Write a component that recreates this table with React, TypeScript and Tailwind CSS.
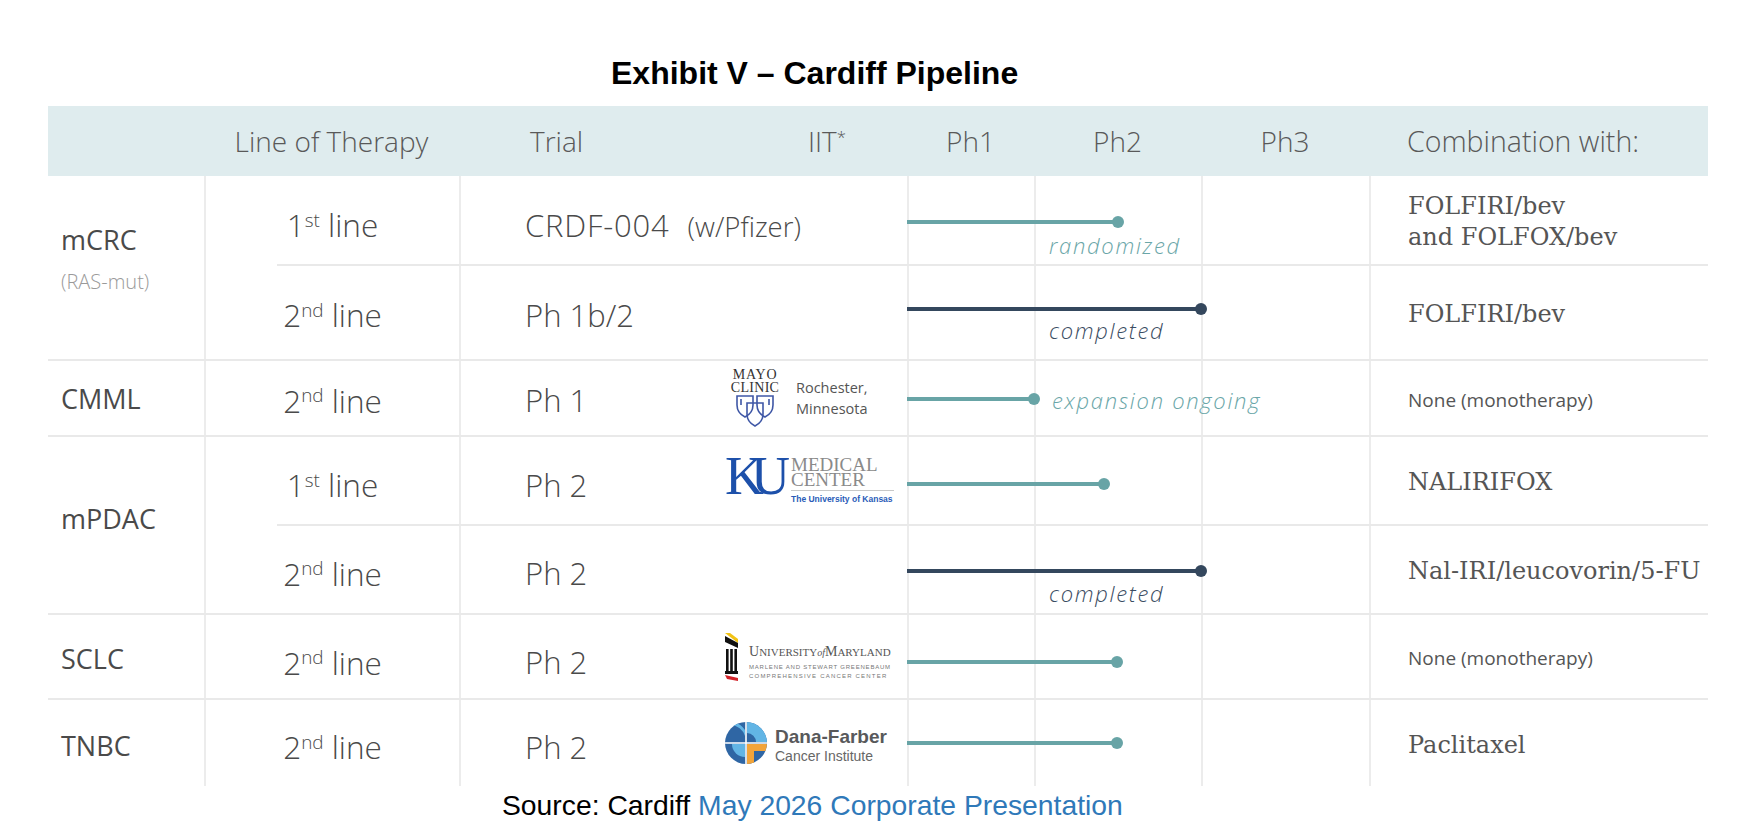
import React from "react";

const sans = "font-[family-name:'Open_Sans',Lato,sans-serif]";
const slab = "font-[family-name:'DejaVu_Serif',serif]";
const times = "font-[family-name:'Liberation_Serif',serif]";
const arial = "font-[family-name:'Liberation_Sans',Arial,sans-serif]";

type Bar = {
  top: number;
  end: number;
  navy?: boolean;
  label?: string;
  labelTop?: number;
  labelLeft?: number;
};

type Sub = {
  h: number;
  dy: number;
  line: [string, string];
  trial: React.ReactNode;
  logo?: React.ReactNode;
  bar: Bar;
  combo: React.ReactNode;
};

const Sup = ({ children }: { children: React.ReactNode }) => (
  <span className="relative -top-[0.55em] text-[0.6em]">{children}</span>
);

const MayoLogo = () => (
  <div className="flex items-center gap-[14px] pl-[3px]">
    <div className={`flex w-[54px] flex-col items-center ${times} text-[#333]`}>
      <span className="text-[14px] leading-[12px] tracking-[0.8px]">MAYO</span>
      <span className="text-[14px] leading-[13px] tracking-[0.3px]">CLINIC</span>
      <svg width="40" height="33" viewBox="0 0 40 33" fill="none" stroke="#3f57a6" strokeWidth="1.6">
        <path d="M2 2 H18 V11 Q18 19 10 23 Q2 19 2 11 Z" />
        <path d="M22 2 H38 V11 Q38 19 30 23 Q22 19 22 11 Z" />
        <path d="M12 9 H28 V20 Q28 28 20 32 Q12 28 12 20 Z" />
        <path d="M6 5 V11 M34 5 V11" />
      </svg>
    </div>
    <div className={`${sans} text-[14.5px] leading-[21px] text-[#555]`}>
      Rochester,
      <br />
      Minnesota
    </div>
  </div>
);

const KuLogo = () => (
  <div className="flex items-start">
    <div className={`${times} mr-[14px] text-[54px] leading-[38px] tracking-[-13px] text-[#1d50aa]`}>KU</div>
    <div className={`flex flex-col ${times} text-[19px] leading-[15px] text-[#8a8a8a]`}>
      <span>
        MEDICAL
        <br />
        CENTER
      </span>
      <div className="mt-[3px] h-[1px] w-[103px] bg-[#c8c8c8]" />
      <span className={`${arial} mt-[3px] text-[8.5px] font-bold leading-[10px] text-[#2a5cb8]`}>
        The University of Kansas
      </span>
    </div>
  </div>
);

const UmdLogo = () => (
  <div className="flex items-start gap-[11px]">
    <svg width="13" height="48" viewBox="0 0 13 48">
      <polygon points="0,0 5,0 13,6 13,10" fill="#f2c314" />
      <polygon points="0,3 13,10 13,15 0,9" fill="#111" />
      <rect x="1" y="16" width="2.6" height="22" fill="#111" />
      <rect x="5.2" y="16" width="2.6" height="22" fill="#111" />
      <rect x="9.4" y="16" width="2.6" height="22" fill="#111" />
      <rect x="0" y="38" width="13" height="3" fill="#111" />
      <polygon points="0,42 13,45 13,48 2,46" fill="#d2232a" />
    </svg>
    <div className="mt-[13px] flex flex-col text-[#555]">
      <span className={`${times} text-[14px] leading-[12px]`}>
        U<span className="text-[11px]">NIVERSITY</span>
        <span className="text-[10px] italic">of</span>M<span className="text-[11px]">ARYLAND</span>
      </span>
      <span className={`${arial} mt-[4px] text-[6px] leading-[9px] tracking-[0.8px] text-[#777]`}>
        MARLENE AND STEWART GREENEBAUM
      </span>
      <span className={`${arial} text-[6px] leading-[9px] tracking-[1.2px] text-[#777]`}>
        COMPREHENSIVE CANCER CENTER
      </span>
    </div>
  </div>
);

const DanaLogo = () => (
  <div className="flex items-end gap-[8px]">
    <svg width="42" height="42" viewBox="0 0 42 42">
      <defs>
        <clipPath id="dfc">
          <circle cx="21" cy="21" r="21" />
        </clipPath>
      </defs>
      <g clipPath="url(#dfc)">
        <rect width="42" height="42" fill="#2f66a4" />
        <path d="M22 0 H42 V20 H31 A9 9 0 0 0 22 11 Z" fill="#62b5e5" />
        <path d="M9 0 A20 20 0 0 1 20 8 V14 A16 16 0 0 0 6 3 Z" fill="#62b5e5" />
        <path d="M7 22 H20 V35 A13 13 0 0 1 7 22 Z" fill="#62b5e5" />
        <rect x="22" y="22" width="20" height="7" fill="#f2a43a" />
        <rect x="22" y="22" width="7" height="20" fill="#f2a43a" />
        <path d="M21 0 V21 H0 M21 21 H42 M21 21 V42" stroke="#fff" strokeWidth="1.6" fill="none" />
      </g>
    </svg>
    <div className={`${arial} flex flex-col`}>
      <span className="text-[19px] font-bold leading-[22px] text-[#58595b]">Dana-Farber</span>
      <span className="text-[14px] leading-[16px] text-[#666]">Cancer Institute</span>
    </div>
  </div>
);

const PhaseCell = ({ bar }: { bar: Bar }) => (
  <div className="relative flex">
    <div className="w-[127px] border-l-2 border-[#ececec]" />
    <div className="w-[167px] border-l-2 border-[#ececec]" />
    <div className="w-[168px] border-l-2 border-[#ececec]" />
    <div className="absolute left-0" style={{ top: bar.top - 2, width: bar.end }}>
      <div className={`h-[4px] w-full ${bar.navy ? "bg-[#34475d]" : "bg-[#68a4a6]"}`} />
      <div
        className={`absolute -right-[6px] -top-[4px] h-[12px] w-[12px] rounded-full ${
          bar.navy ? "bg-[#34475d]" : "bg-[#68a4a6]"
        }`}
      />
    </div>
    {bar.label && (
      <div
        className={`absolute ${sans} whitespace-nowrap text-[22px] font-light italic leading-[28px] tracking-[1.7px] ${
          bar.navy ? "text-[#3a4c62]" : "text-[#6aa6a8]"
        }`}
        style={{ top: (bar.labelTop ?? 0) - 14, left: bar.labelLeft }}
      >
        {bar.label}
      </div>
    )}
  </div>
);

const SubRow = ({ sub }: { sub: Sub }) => (
  <div className="grid grid-cols-[253px_448px_462px_339px]" style={{ height: sub.h }}>
    <div
      className={`flex items-center justify-center ${sans} text-[31.5px] font-light text-[#4a4a4a]`}
      style={{ paddingTop: 7 + sub.dy }}
    >
      <span>
        {sub.line[0]}
        <Sup>{sub.line[1]}</Sup> line
      </span>
    </div>
    <div className="flex items-center border-l-2 border-[#ececec]">
      <div
        className={`w-[264px] pl-[64px] ${sans} whitespace-nowrap text-[31px] font-light text-[#4a4a4a]`}
        style={{ paddingTop: 7 + sub.dy }}
      >
        {sub.trial}
      </div>
      {sub.logo}
    </div>
    <PhaseCell bar={sub.bar} />
    <div className="flex items-center border-l-2 border-[#ececec] pl-[37px] pt-[4px]">{sub.combo}</div>
  </div>
);

const Slab = ({ children }: { children: React.ReactNode }) => (
  <div className={`${slab} text-[24px] leading-[31px] text-[#555]`}>{children}</div>
);

const Mono = () => <div className={`${sans} text-[19px] text-[#555]`}>None (monotherapy)</div>;

type Group = { disease: React.ReactNode; subs: Sub[] };

const groups: Group[] = [
  {
    disease: (
      <div className="flex flex-col pt-[47px]">
        <span className="text-[27px] leading-[34px] text-[#4a4a4a]">mCRC</span>
        <span className="mt-[8px] text-[20px] font-light leading-[34px] text-[#9a9a9a]">(RAS-mut)</span>
      </div>
    ),
    subs: [
      {
        h: 88,
        dy: 3,
        line: ["1", "st"],
        trial: (
          <span>
            <span className="tracking-[0.8px]">CRDF-004</span>
            <span className="ml-[18px] text-[27.5px]">(w/Pfizer)</span>
          </span>
        ),
        bar: { top: 46, end: 211, label: "randomized", labelTop: 69, labelLeft: 142 },
        combo: (
          <Slab>
            FOLFIRI/bev
            <br />
            and FOLFOX/bev
          </Slab>
        ),
      },
      {
        h: 93,
        dy: -2,
        line: ["2", "nd"],
        trial: "Ph 1b/2",
        bar: { top: 43, end: 294, navy: true, label: "completed", labelTop: 64, labelLeft: 142 },
        combo: <Slab>FOLFIRI/bev</Slab>,
      },
    ],
  },
  {
    disease: <span className="pt-[2px] text-[27px] text-[#4a4a4a]">CMML</span>,
    subs: [
      {
        h: 74,
        dy: -2,
        line: ["2", "nd"],
        trial: "Ph 1",
        logo: <MayoLogo />,
        bar: { top: 38, end: 127, label: "expansion ongoing", labelTop: 39, labelLeft: 145 },
        combo: <Mono />,
      },
    ],
  },
  {
    disease: <span className="pb-[12px] text-[27px] text-[#4a4a4a]">mPDAC</span>,
    subs: [
      {
        h: 87,
        dy: 2,
        line: ["1", "st"],
        trial: "Ph 2",
        logo: <KuLogo />,
        bar: { top: 47, end: 197 },
        combo: <Slab>NALIRIFOX</Slab>,
      },
      {
        h: 87,
        dy: 1,
        line: ["2", "nd"],
        trial: "Ph 2",
        bar: { top: 45, end: 294, navy: true, label: "completed", labelTop: 67, labelLeft: 142 },
        combo: <Slab>Nal-IRI/leucovorin/5-FU</Slab>,
      },
    ],
  },
  {
    disease: <span className="pt-[6px] text-[27px] text-[#4a4a4a]">SCLC</span>,
    subs: [
      {
        h: 83,
        dy: 5,
        line: ["2", "nd"],
        trial: "Ph 2",
        logo: <UmdLogo />,
        bar: { top: 47, end: 210 },
        combo: <Mono />,
      },
    ],
  },
  {
    disease: <span className="pt-[6px] text-[27px] text-[#4a4a4a]">TNBC</span>,
    subs: [
      {
        h: 86,
        dy: 1,
        line: ["2", "nd"],
        trial: "Ph 2",
        logo: <DanaLogo />,
        bar: { top: 43, end: 210 },
        combo: <Slab>Paclitaxel</Slab>,
      },
    ],
  },
];

export default function App() {
  return (
    <div className="min-h-screen w-[1748px] bg-white pt-[55px]">
      <div className={`pl-[611px] ${arial} text-[32px] font-bold leading-[36px] text-black`}>
        Exhibit V – Cardiff Pipeline
      </div>

      <div className="ml-[48px] mt-[15px] w-[1660px]">
        {/* header band */}
        <div className={`flex h-[70px] items-center bg-[#dfecee] ${sans} text-[28px] font-light text-[#595959]`}>
          <div className="w-[156px]" />
          <div className="w-[255px] text-center">Line of Therapy</div>
          <div className="flex w-[448px]">
            <div className="w-[264px] pl-[71px]">Trial</div>
            <div className="pl-[85px]">
              IIT<Sup>*</Sup>
            </div>
          </div>
          <div className="w-[127px] text-center">Ph1</div>
          <div className="w-[167px] text-center">Ph2</div>
          <div className="w-[168px] text-center">Ph3</div>
          <div className="w-[339px] pl-[38px] text-[28.5px]">Combination with:</div>
        </div>

        {groups.map((g, gi) => (
          <div key={gi} className={`flex ${gi > 0 ? "border-t-2 border-[#e9e9e9]" : ""}`}>
            <div className={`flex w-[156px] ${gi === 0 ? "items-start" : "items-center"} pl-[13px] ${sans}`}>
              {g.disease}
            </div>
            <div className="flex flex-col border-l-2 border-[#ececec]">
              {g.subs.map((s, si) => (
                <React.Fragment key={si}>
                  {si > 0 && <div className="ml-[71px] h-[2px] bg-[#e9e9e9]" />}
                  <SubRow sub={s} />
                </React.Fragment>
              ))}
            </div>
          </div>
        ))}
      </div>

      <div className={`mt-[3px] pl-[502px] ${arial} text-[28.3px] leading-[32px] text-black`}>
        Source: Cardiff <span className="text-[#2f79b9]">May 2026 Corporate Presentation</span>
      </div>
    </div>
  );
}
